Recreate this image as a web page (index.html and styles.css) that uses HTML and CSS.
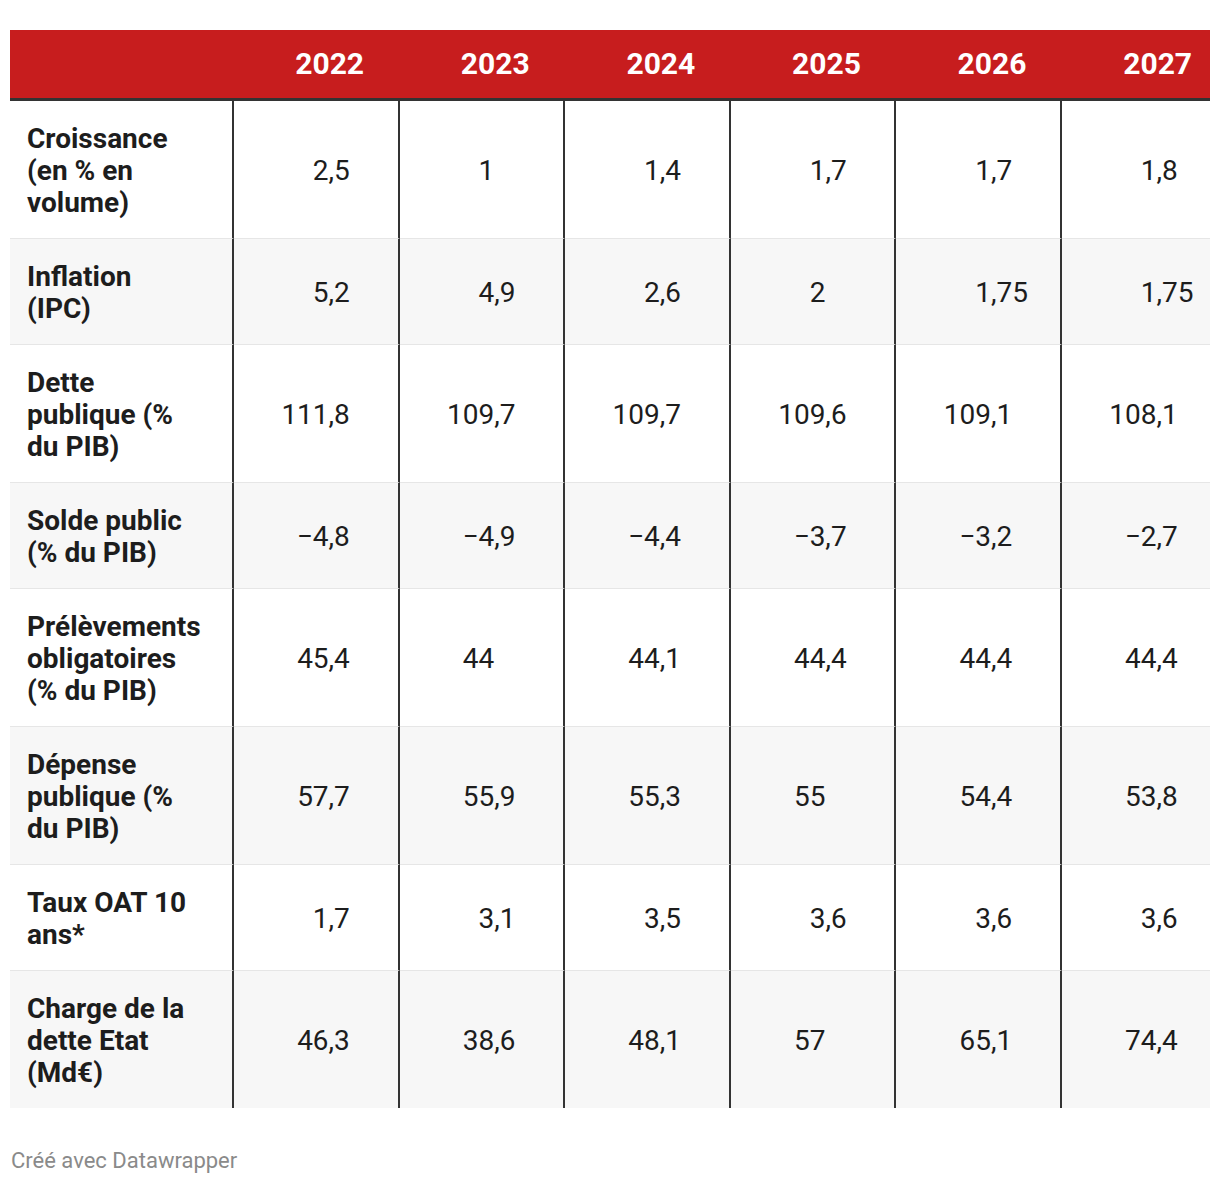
FILE: index.html
```html
<!DOCTYPE html>
<html lang="fr">
<head>
<meta charset="utf-8">
<title>Tableau</title>
<link rel="stylesheet" href="styles.css">
</head>
<body>
<div class="wrap">
  <div class="table">
    <div class="row head">
      <div class="hc label"></div>
      <div class="hc">2022</div>
      <div class="hc">2023</div>
      <div class="hc">2024</div>
      <div class="hc">2025</div>
      <div class="hc">2026</div>
      <div class="hc">2027</div>
    </div>
    <div class="row">
      <div class="c label">Croissance (en % en volume)</div>
      <div class="c num">2,5<span class="p">0</span></div>
      <div class="c num">1<span class="p">,00</span></div>
      <div class="c num">1,4<span class="p">0</span></div>
      <div class="c num">1,7<span class="p">0</span></div>
      <div class="c num">1,7<span class="p">0</span></div>
      <div class="c num">1,8<span class="p">0</span></div>
    </div>
    <div class="row alt">
      <div class="c label">Inflation (IPC)</div>
      <div class="c num">5,2<span class="p">0</span></div>
      <div class="c num">4,9<span class="p">0</span></div>
      <div class="c num">2,6<span class="p">0</span></div>
      <div class="c num">2<span class="p">,00</span></div>
      <div class="c num">1,75</div>
      <div class="c num">1,75</div>
    </div>
    <div class="row">
      <div class="c label">Dette publique (% du PIB)</div>
      <div class="c num">111,8<span class="p">0</span></div>
      <div class="c num">109,7<span class="p">0</span></div>
      <div class="c num">109,7<span class="p">0</span></div>
      <div class="c num">109,6<span class="p">0</span></div>
      <div class="c num">109,1<span class="p">0</span></div>
      <div class="c num">108,1<span class="p">0</span></div>
    </div>
    <div class="row alt">
      <div class="c label">Solde public (% du PIB)</div>
      <div class="c num">−4,8<span class="p">0</span></div>
      <div class="c num">−4,9<span class="p">0</span></div>
      <div class="c num">−4,4<span class="p">0</span></div>
      <div class="c num">−3,7<span class="p">0</span></div>
      <div class="c num">−3,2<span class="p">0</span></div>
      <div class="c num">−2,7<span class="p">0</span></div>
    </div>
    <div class="row">
      <div class="c label">Prélèvements obligatoires (% du PIB)</div>
      <div class="c num">45,4<span class="p">0</span></div>
      <div class="c num">44<span class="p">,00</span></div>
      <div class="c num">44,1<span class="p">0</span></div>
      <div class="c num">44,4<span class="p">0</span></div>
      <div class="c num">44,4<span class="p">0</span></div>
      <div class="c num">44,4<span class="p">0</span></div>
    </div>
    <div class="row alt">
      <div class="c label">Dépense publique (% du PIB)</div>
      <div class="c num">57,7<span class="p">0</span></div>
      <div class="c num">55,9<span class="p">0</span></div>
      <div class="c num">55,3<span class="p">0</span></div>
      <div class="c num">55<span class="p">,00</span></div>
      <div class="c num">54,4<span class="p">0</span></div>
      <div class="c num">53,8<span class="p">0</span></div>
    </div>
    <div class="row">
      <div class="c label">Taux OAT 10 ans*</div>
      <div class="c num">1,7<span class="p">0</span></div>
      <div class="c num">3,1<span class="p">0</span></div>
      <div class="c num">3,5<span class="p">0</span></div>
      <div class="c num">3,6<span class="p">0</span></div>
      <div class="c num">3,6<span class="p">0</span></div>
      <div class="c num">3,6<span class="p">0</span></div>
    </div>
    <div class="row alt last">
      <div class="c label">Charge de la dette Etat (Md€)</div>
      <div class="c num">46,3<span class="p">0</span></div>
      <div class="c num">38,6<span class="p">0</span></div>
      <div class="c num">48,1<span class="p">0</span></div>
      <div class="c num">57<span class="p">,00</span></div>
      <div class="c num">65,1<span class="p">0</span></div>
      <div class="c num">74,4<span class="p">0</span></div>
    </div>
  </div>
  <div class="footer">Créé avec Datawrapper</div>
</div>
</body>
</html>
```
FILE: styles.css
```css
* { box-sizing: border-box; }
html, body { margin: 0; padding: 0; background: #ffffff; }
body {
  font-family: Roboto, "Liberation Sans", sans-serif;
  color: #1d1d1d;
}
.wrap {
  padding: 30px 10px 0 10px;
}
.table {
  display: grid;
  grid-template-columns: 224px repeat(6, 165.6px);
  width: 1200px;
  overflow: hidden;
}
.row { display: contents; }

.hc {
  background: #c71d1e;
  color: #ffffff;
  font-weight: 700;
  font-size: 30px;
  line-height: 36px;
  padding: 16px 35.5px 16px 10px;
  text-align: right;
  border-bottom: 3px solid #333333;
  height: 71px;
}
.hc.label { padding: 0; }

.c {
  padding: 22px 0 19px 0;
  font-size: 28px;
  line-height: 32px;
  border-bottom: 1px solid #e6e6e6;
  background: #ffffff;
}
.row.alt .c { background: #f7f7f7; }
.row.last .c { border-bottom: none; }

.c.label {
  font-weight: 700;
  padding-left: 17px;
  padding-right: 32px;
  border-right: 2px solid #333333;
}
.c.num {
  display: flex;
  align-items: center;
  justify-content: flex-end;
  padding-right: 32px;
  border-right: 2px solid #333333;
  white-space: nowrap;
  font-variant-numeric: tabular-nums;
}
.p { visibility: hidden; }

.footer {
  margin-top: 41px;
  padding-left: 1px;
  font-size: 22px;
  line-height: 24px;
  color: #8a8a8a;
}
```
